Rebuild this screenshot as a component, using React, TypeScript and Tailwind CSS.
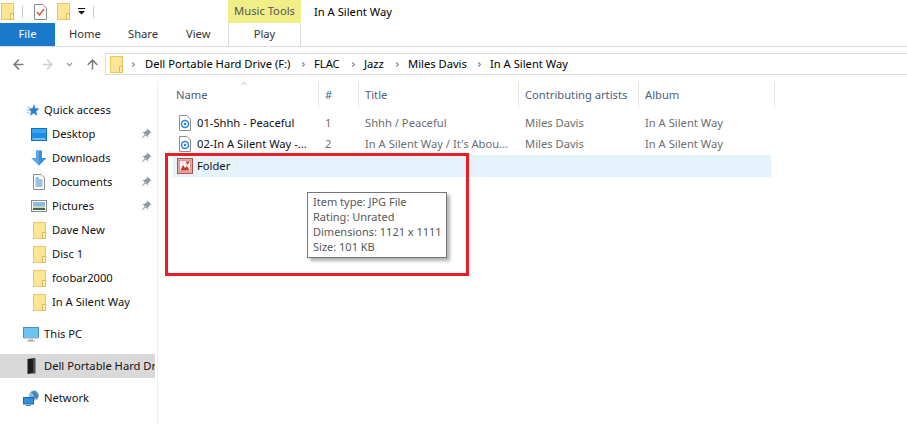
import React from 'react';
import { ArrowLeft, ArrowRight, ArrowUp, ChevronDown, ChevronRight, ChevronUp } from 'lucide-react';

const FolderIcon = ({ className = '' }: { className?: string }) => (
  <svg viewBox="0 0 13 17" className={`w-[13px] h-[17px] shrink-0 ${className}`}>
    <rect x="0.5" y="0.5" width="12" height="16" fill="#fde595" stroke="#e9c766" />
    <rect x="9.5" y="10.5" width="3" height="6" fill="#fff2c0" stroke="#e6b94a" />
  </svg>
);

const PinIcon = () => (
  <svg viewBox="0 0 12 12" className="w-[12px] h-[12px] shrink-0">
    <path d="M7.5 0.5 L11.5 4.5 L10 5 L8 7.5 L8 9.5 L2.5 4 L4.5 4 L7 2 Z" fill="#8f9aa3" />
    <path d="M4.5 6.5 L1 11 L5.5 7.5 Z" fill="#8f9aa3" />
  </svg>
);

const StarIcon = () => (
  <svg viewBox="0 0 16 16" className="w-[15px] h-[15px] shrink-0">
    <path d="M9.5 1 L11 5.5 L15.5 5.8 L12 8.8 L13.2 13.5 L9.3 11 L5.3 13.5 L6.5 8.8 L3.5 6 L8 5.5 Z" fill="#2b7cd3" />
    <path d="M2 4.5 H6 M1 7.5 H5 M1.5 10.5 H5" stroke="#8fc4ee" strokeWidth="1" />
  </svg>
);

const DesktopIcon = () => (
  <svg viewBox="0 0 16 13" className="w-[16px] h-[13px] shrink-0">
    <rect x="0.5" y="0.5" width="15" height="12" fill="#1d8fe8" stroke="#0f6fc0" />
    <rect x="1" y="1" width="14" height="4" fill="#3aa6f0" />
    <rect x="1.5" y="10.5" width="13" height="1" fill="#cfe9fb" />
  </svg>
);

const DownloadIcon = () => (
  <svg viewBox="0 0 16 16" className="w-[16px] h-[16px] shrink-0">
    <path d="M5 0.5 H11 V8 H15.5 L8 15.5 L0.5 8 H5 Z" fill="#3c8ee0" />
    <path d="M5 0.5 H8 V15.5 L0.5 8 H5 Z" fill="#5aa6ea" />
  </svg>
);

const DocumentsIcon = () => (
  <svg viewBox="0 0 12 16" className="w-[12px] h-[16px] shrink-0">
    <path d="M0.5 0.5 H8 L11.5 4 V15.5 H0.5 Z" fill="#fff" stroke="#8a8a8a" />
    <path d="M2.5 6 H9.5 M2.5 8 H9.5 M2.5 10 H9.5 M2.5 12 H9.5 M2.5 4 H6" stroke="#3a86c8" />
  </svg>
);

const PicturesIcon = () => (
  <svg viewBox="0 0 16 12" className="w-[16px] h-[12px] shrink-0">
    <rect x="0.5" y="0.5" width="15" height="11" fill="#fff" stroke="#8a8a8a" />
    <rect x="2" y="2" width="12" height="4" fill="#8dbce0" />
    <rect x="2" y="6" width="12" height="2" fill="#c8d8c8" />
    <rect x="2" y="8" width="12" height="2" fill="#3f6b4a" />
  </svg>
);

const MonitorIcon = () => (
  <svg viewBox="0 0 16 15" className="w-[16px] h-[15px] shrink-0">
    <rect x="0.5" y="0.5" width="15" height="10" fill="#6cc4f5" stroke="#4a90c8" />
    <rect x="1" y="10.5" width="14" height="1.5" fill="#c8d0d8" />
    <path d="M6 12.5 H10 V13.5 H12 V14.5 H4 V13.5 H6 Z" fill="#9aa6b0" />
  </svg>
);

const DriveIcon = () => (
  <svg viewBox="0 0 9 16" className="w-[9px] h-[16px] shrink-0">
    <path d="M0.5 1 L8 0 V15 L0.5 16 Z" fill="#1d1d1d" />
    <path d="M6 0.5 H8.5 V15.5 H6 Z" fill="#4a4a4a" />
  </svg>
);

const NetworkIcon = () => (
  <svg viewBox="0 0 17 16" className="w-[17px] h-[16px] shrink-0">
    <circle cx="11" cy="5.5" r="5" fill="#8fb8d8" />
    <path d="M8 2 Q11 4 11 8 L14 9 L15.5 5 L12 0.8 Z" fill="#4a85b5" />
    <rect x="0.5" y="7.5" width="10" height="6.5" fill="#2f8fdc" stroke="#1d6aa8" />
    <path d="M3 15.5 H8" stroke="#5a7a94" />
  </svg>
);

const AudioFileIcon = () => (
  <svg viewBox="0 0 12 16" className="w-[12px] h-[16px] shrink-0">
    <path d="M0.5 0.5 H8 L11.5 4 V15.5 H0.5 Z" fill="#fff" stroke="#8f8f8f" />
    <circle cx="6" cy="9" r="3.5" fill="none" stroke="#2c86dc" strokeWidth="1.5" />
    <circle cx="6" cy="9" r="1.3" fill="#2c86dc" />
  </svg>
);

const ImageFileIcon = () => (
  <svg viewBox="0 0 16 16" className="w-[16px] h-[16px] shrink-0">
    <rect x="0.5" y="0.5" width="15" height="15" fill="#e8a8a0" stroke="#b0504a" />
    <rect x="2.5" y="2.5" width="11" height="11" fill="#fbeeee" stroke="#c86a62" strokeWidth="0.5" />
    <path d="M3.5 12.5 L6 7 L8 10 L10 8 L12.5 12.5 Z" fill="#c0392b" />
    <path d="M9 3.5 L13 3.5 L10 7 Z" fill="#c0392b" />
  </svg>
);

const navItems = [
  { label: 'Desktop', icon: <DesktopIcon />, pin: true },
  { label: 'Downloads', icon: <DownloadIcon />, pin: true },
  { label: 'Documents', icon: <div className="ml-[2px] mr-[2px] flex"><DocumentsIcon /></div>, pin: true },
  { label: 'Pictures', icon: <PicturesIcon />, pin: true },
  { label: 'Dave New', icon: <div className="ml-[2px] mr-[1px] flex"><FolderIcon /></div> },
  { label: 'Disc 1', icon: <div className="ml-[2px] mr-[1px] flex"><FolderIcon /></div> },
  { label: 'foobar2000', icon: <div className="ml-[2px] mr-[1px] flex"><FolderIcon /></div> },
  { label: 'In A Silent Way', icon: <div className="ml-[2px] mr-[1px] flex"><FolderIcon /></div> },
];

const columns = [
  { label: 'Name', width: 'w-[150px] pl-[7px]' },
  { label: '#', width: 'w-[40px] pl-[6px]' },
  { label: 'Title', width: 'w-[160px] pl-[6px]' },
  { label: 'Contributing artists', width: 'w-[120px] pl-[6px]' },
  { label: 'Album', width: 'w-[136px] pl-[6px]' },
];

const tracks = [
  { name: '01-Shhh - Peaceful', num: '1', title: 'Shhh / Peaceful' },
  { name: '02-In A Silent Way -...', num: '2', title: "In A Silent Way / It's Abou..." },
];

const Crumb = ({ label, width }: { label: string; width: string }) => (
  <span className={`${width} flex items-center shrink-0`}>
    <span className="whitespace-nowrap">{label}</span>
  </span>
);

const Sep = () => <ChevronRight className="mr-[7px] w-[7px] h-[7px] text-[#888] shrink-0" strokeWidth={4} />;

export default function App() {
  return (
    <div className="relative w-[907px] h-[424px] overflow-hidden bg-white text-[11.2px] text-black font-['Noto_Sans',sans-serif]">
      {/* title bar */}
      <div className="flex h-[23px]">
        <div className="flex items-center h-full pl-[1px] w-[228px]">
          <FolderIcon />
          <div className="ml-[8px] w-px h-[12px] bg-[#c8c8c8]" />
          <svg viewBox="0 0 13 16" className="ml-[11px] w-[13px] h-[16px]">
            <path d="M0.5 0.5 H9 L12.5 4 V15.5 H0.5 Z" fill="#fff" stroke="#8a8a8a" />
            <path d="M3 8 L5.5 11 L10 5" fill="none" stroke="#e2572b" strokeWidth="1.4" />
          </svg>
          <div className="ml-[10px]"><FolderIcon /></div>
          <svg viewBox="0 0 7 7" className="ml-[8px] w-[7px] h-[7px]">
            <path d="M0 0 H7 V1 H0 Z M0 3 H7 L3.5 6.5 Z" fill="#111" />
          </svg>
          <div className="ml-[8px] w-px h-[12px] bg-[#c8c8c8]" />
        </div>
        <div className="w-[73px] h-full bg-[#f0ee87] flex items-center justify-center text-[#555]">Music Tools</div>
        <div className="pl-[13px] pt-[1px] flex items-center">In A Silent Way</div>
      </div>

      {/* ribbon tabs */}
      <div className="flex h-[24px] border-b border-[#dadbdc] text-[#333]">
        <div className="w-[55px] h-[23px] bg-[#1979ca] text-white flex items-center justify-center">File</div>
        <div className="w-[173px] flex items-center">
          <span className="ml-[14px] w-[59px]">Home</span>
          <span className="w-[58px]">Share</span>
          <span>View</span>
        </div>
        <div className="w-[73px] h-[23px] border-x border-[#dadbdc] flex items-center justify-center">Play</div>
      </div>

      {/* address bar */}
      <div className="flex items-center h-[34px]">
        <div className="flex items-center w-[105px]">
          <ArrowLeft className="ml-[11px] w-[15px] h-[15px] text-[#7a7a7a]" strokeWidth={2.4} />
          <ArrowRight className="ml-[14px] w-[15px] h-[15px] text-[#d0d0d0]" strokeWidth={2.4} />
          <ChevronDown className="ml-[10px] w-[9px] h-[9px] text-[#8a8a8a]" strokeWidth={3} />
          <ArrowUp className="ml-[11px] w-[15px] h-[15px] text-[#7a7a7a]" strokeWidth={2.4} />
        </div>
        <div className="flex-1 h-[22px] border border-[#d9d9d9] border-r-0 flex items-center pl-[4px]">
          <FolderIcon />
          <ChevronRight className="ml-[7px] mr-[8px] w-[7px] h-[7px] text-[#888] shrink-0" strokeWidth={4} />
          <Crumb label="Dell Portable Hard Drive (F:)" width="w-[155px]" />
          <Sep />
          <Crumb label="FLAC" width="w-[36px]" />
          <Sep />
          <Crumb label="Jazz" width="w-[30px]" />
          <Sep />
          <Crumb label="Miles Davis" width="w-[68px]" />
          <Sep />
          <Crumb label="In A Silent Way" width="w-[90px]" />
        </div>
      </div>

      <div className="flex h-[343px]">
        {/* nav pane */}
        <aside className="w-[158px] h-full border-r border-[#eeeeee] pt-[17px] shrink-0 text-[#111]">
          <div className="h-[24px] flex items-center pl-[25px] gap-[4px]">
            <StarIcon />
            <span>Quick access</span>
          </div>
          {navItems.map(item => (
            <div key={item.label} className="h-[24px] flex items-center pl-[31px] pr-[5px] gap-[5px]">
              {item.icon}
              <span className="flex-1 whitespace-nowrap">{item.label}</span>
              {item.pin && <PinIcon />}
            </div>
          ))}
          <div className="mt-[8px] h-[24px] flex items-center pl-[23px] gap-[5px]">
            <MonitorIcon />
            <span>This PC</span>
          </div>
          <div className="mt-[8px] h-[24px] w-[155px] bg-[#d9d9d9] flex items-center pl-[27px] gap-[8px] overflow-hidden">
            <DriveIcon />
            <span className="whitespace-nowrap">Dell Portable Hard Dr</span>
          </div>
          <div className="mt-[8px] h-[24px] flex items-center pl-[23px] gap-[4px]">
            <NetworkIcon />
            <span>Network</span>
          </div>
        </aside>

        {/* file list */}
        <main className="flex-1 pl-[11px] pt-[1px]">
          <div className="relative flex h-[25px] text-[#4c607a]">
            <ChevronUp className="absolute left-[69px] top-[-3px] w-[12px] h-[9px] text-[#888]" strokeWidth={1.5} />
            {columns.map(col => (
              <div key={col.label} className={`${col.width} pt-[1px] flex items-center border-r border-[#e5e5e5]`}>
                {col.label}
              </div>
            ))}
          </div>
          <div className="mt-[6px] ml-[4px] w-[598px] text-[#6d6d6d]">
            {tracks.map(track => (
              <div key={track.name} className="flex h-[21px] items-center">
                <div className="w-[145px] pl-[6px] flex items-center gap-[6px] text-[#111]">
                  <AudioFileIcon />
                  <span className="whitespace-nowrap">{track.name}</span>
                </div>
                <div className="w-[40px] pl-[7px]">{track.num}</div>
                <div className="w-[160px] pl-[7px] whitespace-nowrap">{track.title}</div>
                <div className="w-[120px] pl-[7px]">Miles Davis</div>
                <div className="pl-[7px]">In A Silent Way</div>
              </div>
            ))}
            <div className="flex h-[22px] items-center bg-[#e5f3fd] pl-[4px] gap-[4px] text-[#111]">
              <ImageFileIcon />
              <span>Folder</span>
            </div>
          </div>
        </main>
      </div>

      {/* tooltip */}
      <div className="absolute left-[307px] top-[192px] w-[140px] h-[66px] bg-white border border-[#767676] shadow-[3px_3px_3px_rgba(0,0,0,0.3)] pl-[5px] pt-px text-[11px] text-[#575757] leading-[15px] whitespace-nowrap">
        <div>Item type: JPG File</div>
        <div>Rating: Unrated</div>
        <div>Dimensions: 1121 x 1111</div>
        <div>Size: 101 KB</div>
      </div>

      {/* red annotation box */}
      <div className="absolute left-[165px] top-[153px] w-[304px] h-[123px] border-[3px] border-[#ed1c24]" />
    </div>
  );
}
